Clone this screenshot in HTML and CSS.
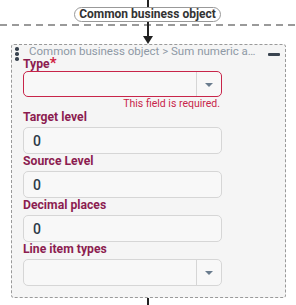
FILE: index.html
```html
<!DOCTYPE html>
<html lang="en">
<head>
    <meta charset="UTF-8">
    <meta name="viewport" content="width=device-width, initial-scale=1.0">
    <title>Sum numeric attribute</title>
    <link rel="stylesheet" href="styles.css">
</head>
<body>
    <div class="flow">
        <div class="lane-divider"></div>
        <div class="wire wire-top"></div>
        <div class="pill">Common business object</div>
        <div class="wire wire-mid"></div>
        <div class="arrow"></div>
    </div>

    <div class="card">
        <div class="card-head">
            <span class="handle"><i></i><i></i><i></i></span>
            <span class="crumb">Common business object &gt; Sum numeric attribute</span>
            <span class="collapse"></span>
        </div>

        <div class="field field-type">
            <label class="lbl">Type<span class="req">*</span></label>
            <div class="select is-invalid">
                <span class="select-value"></span>
                <span class="select-caret"></span>
            </div>
            <div class="error">This field is required.</div>
        </div>

        <div class="field">
            <label class="lbl" for="target">Target level</label>
            <input class="txt" id="target" type="text" value="0">
        </div>

        <div class="field">
            <label class="lbl" for="source">Source Level</label>
            <input class="txt" id="source" type="text" value="0">
        </div>

        <div class="field">
            <label class="lbl" for="decimals">Decimal places</label>
            <input class="txt" id="decimals" type="text" value="0">
        </div>

        <div class="field">
            <label class="lbl">Line item types</label>
            <div class="select">
                <span class="select-value"></span>
                <span class="select-caret"></span>
            </div>
        </div>
    </div>

    <div class="flow">
        <div class="wire wire-bottom"></div>
    </div>
</body>
</html>
```

FILE: styles.css
```css
* {
    box-sizing: border-box;
}

body {
    margin: 0;
    width: 296px;
    background: #fff;
    font-family: Roboto, "Noto Sans", sans-serif;
}

/* connector above and below the card */
.flow {
    position: relative;
    display: flex;
    flex-direction: column;
    align-items: center;
    width: 296px;
    padding-right: 1px;
}

.lane-divider {
    position: absolute;
    left: 0;
    right: 0;
    top: 24px;
    height: 2px;
    background: repeating-linear-gradient(to right, #9a9a9a 0 7px, transparent 7px 12px);
}

.wire {
    position: relative;
    width: 2px;
    background: #222;
}

.wire-top {
    height: 7px;
}

.wire-mid {
    height: 14px;
}

.wire-bottom {
    height: 8px;
}

.arrow {
    position: relative;
    width: 0;
    height: 0;
    border-left: 5px solid transparent;
    border-right: 5px solid transparent;
    border-top: 8px solid #222;
}

.pill {
    position: relative;
    padding: 0 4px;
    height: 15px;
    line-height: 13px;
    border: 1px solid #999;
    border-radius: 8px;
    background: #fff;
    color: #333;
    font-size: 12px;
    font-weight: 700;
    white-space: nowrap;
}

/* the step card */
.card {
    margin-left: 11px;
    width: 275px;
    height: 254px;
    padding: 0 0 0 11px;
    border: 1px dashed #9a9a9a;
    border-radius: 3px;
    background: #f5f5f5;
}

.card-head {
    display: flex;
    align-items: flex-start;
    height: 11px;
    margin-left: -8px;
    padding-right: 5px;
}

.handle {
    display: flex;
    flex-direction: column;
    gap: 1.5px;
    width: 3px;
    margin-top: 2px;
}

.handle i {
    width: 3.5px;
    height: 3.5px;
    border-radius: 50%;
    background: #3a4450;
}

.crumb {
    flex: 1;
    min-width: 0;
    margin-left: 11px;
    line-height: 13px;
    color: #8e99a5;
    font-size: 11.5px;
    white-space: nowrap;
    overflow: hidden;
    text-overflow: ellipsis;
}

.collapse {
    width: 12px;
    height: 3px;
    margin-left: 10px;
    margin-top: 8px;
    border-radius: 1px;
    background: #3a4450;
}

.field {
    width: 199px;
}

.lbl {
    display: block;
    height: 14px;
    line-height: 14px;
    color: #8c1d50;
    font-size: 12.2px;
    font-weight: 700;
    margin-bottom: 3px;
}

.field-type .lbl {
    margin-bottom: 1px;
}

.req {
    color: #d0213f;
    font-size: 15px;
}

.txt {
    display: block;
    width: 199px;
    height: 27px;
    padding: 0 9px;
    border: 1px solid #d6d6d6;
    border-radius: 5px;
    background: #f8f8f8;
    color: #2c3a48;
    font-family: inherit;
    font-size: 14px;
    font-weight: 500;
    outline: none;
}

.select {
    display: flex;
    width: 199px;
    height: 27px;
    border: 1px solid #d6d6d6;
    border-radius: 5px;
    background: #f8f8f8;
}

.select.is-invalid {
    height: 26px;
    border-color: #c8254a;
}

.select-value {
    flex: 1;
}

.select-caret {
    position: relative;
    width: 25px;
    border-left: 1px solid #d6d6d6;
}

.select-caret::after {
    content: "";
    position: absolute;
    left: 8px;
    top: 11px;
    border-left: 4px solid transparent;
    border-right: 4px solid transparent;
    border-top: 4px solid #6a7c8e;
}

.error {
    height: 13px;
    padding-right: 2px;
    text-align: right;
    color: #c8254a;
    font-size: 10.5px;
    line-height: 13px;
}
```
